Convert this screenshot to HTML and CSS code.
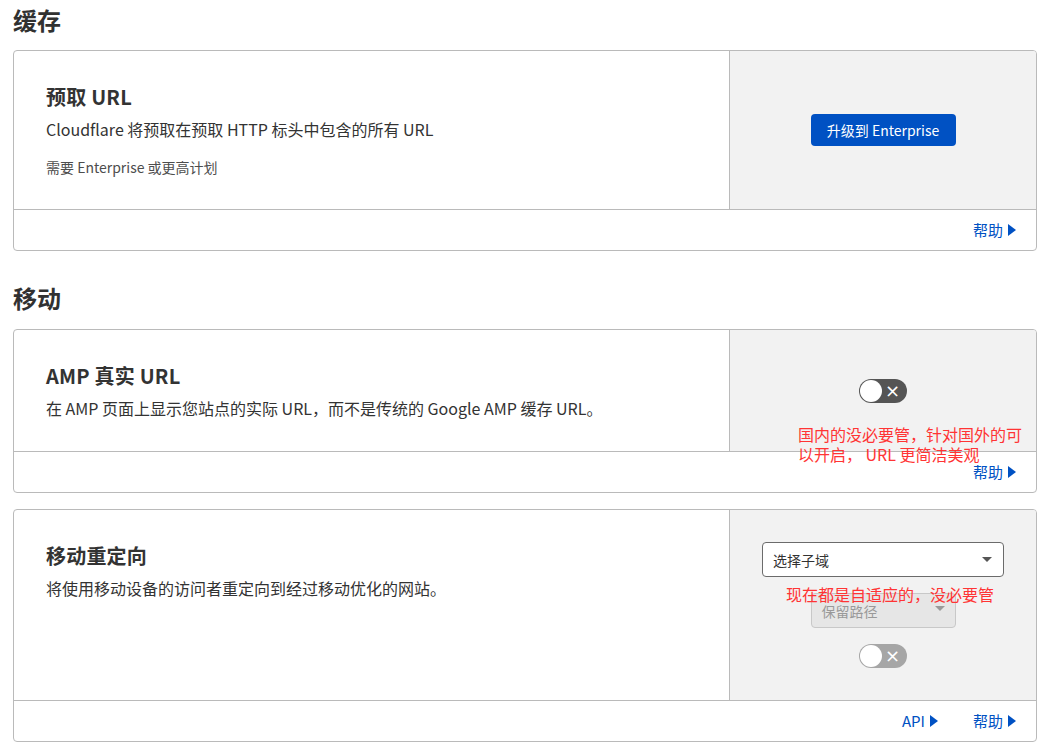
FILE: index.html
```html
<!DOCTYPE html>
<html lang="zh-CN">
<head>
<meta charset="utf-8">
<title>缓存 / 移动</title>
<link rel="stylesheet" href="styles.css">
</head>
<body>
<main class="page">
  <h2 class="section-title">缓存</h2>
  <div class="card">
    <div class="card-main">
      <div class="card-info">
        <h3 class="card-title">预取 URL</h3>
        <p class="card-desc">Cloudflare 将预取在预取 HTTP 标头中包含的所有 URL</p>
        <p class="card-note">需要 Enterprise 或更高计划</p>
      </div>
      <div class="card-control">
        <button class="btn-primary">升级到 Enterprise</button>
      </div>
    </div>
    <div class="card-footer">
      <a class="footer-link">帮助<span class="tri"></span></a>
    </div>
  </div>

  <h2 class="section-title section-gap">移动</h2>
  <div class="card">
    <div class="card-main main-amp">
      <div class="card-info">
        <h3 class="card-title">AMP 真实 URL</h3>
        <p class="card-desc">在 AMP 页面上显示您站点的实际 URL，而不是传统的 Google AMP 缓存 URL。</p>
      </div>
      <div class="card-control">
        <span class="toggle"><span class="knob"></span><span class="x">×</span></span>
      </div>
    </div>
    <div class="card-footer">
      <a class="footer-link">帮助<span class="tri"></span></a>
    </div>
    <div class="note note-amp">国内的没必要管，针对国外的可以开启， URL 更简洁美观</div>
  </div>

  <div class="card card-gap">
    <div class="card-main main-redirect">
      <div class="card-info">
        <h3 class="card-title">移动重定向</h3>
        <p class="card-desc">将使用移动设备的访问者重定向到经过移动优化的网站。</p>
      </div>
      <div class="card-control control-stack">
        <div class="select select-wide"><span>选择子域</span><span class="caret"></span></div>
        <div class="select select-disabled"><span>保留路径</span><span class="caret"></span></div>
        <span class="toggle toggle-disabled"><span class="knob"></span><span class="x">×</span></span>
      </div>
    </div>
    <div class="card-footer">
      <a class="footer-link">API<span class="tri"></span></a>
      <a class="footer-link">帮助<span class="tri"></span></a>
    </div>
    <div class="note note-redirect">现在都是自适应的，没必要管</div>
  </div>
</main>
</body>
</html>
```

FILE: styles.css
```css
* { box-sizing: border-box; }
html, body { margin: 0; padding: 0; background: #fff; }
body {
  font-family: "Noto Sans CJK SC", "Noto Sans", "Open Sans", sans-serif;
  color: #333;
}
.page { padding: 0 7px 0 13px; }
.section-title {
  margin: 0 0 10px;
  height: 40px;
  line-height: 40px;
  font-size: 24px;
  font-weight: 700;
  color: #313131;
}
.section-gap { margin-top: 27px; margin-bottom: 11px; }
.card {
  position: relative;
  border: 1px solid #bababa;
  border-radius: 4px;
  background: #fff;
}
.card-gap { margin-top: 16px; }
.card-main {
  display: flex;
  height: 159px;
  border-bottom: 1px solid #bababa;
}
.main-amp { height: 122px; }
.main-redirect { height: 191px; }
.card-info {
  flex: 1;
  padding: 33px 20px 0 32px;
}
.card-title {
  margin: 0;
  font-size: 20px;
  line-height: 26px;
  font-weight: 700;
  color: #333;
  letter-spacing: 0.2px;
}
.card-desc {
  margin: 6px 0 0;
  font-size: 16px;
  line-height: 26px;
  color: #333;
}
.card-note {
  margin: 15px 0 0;
  font-size: 14px;
  line-height: 20px;
  color: #4d4d4d;
}
.card-control {
  width: 307px;
  flex: none;
  background: #f2f2f2;
  border-left: 1px solid #bababa;
  border-top-right-radius: 3px;
  display: flex;
  align-items: center;
  justify-content: center;
}
.control-stack {
  flex-direction: column;
  gap: 16px;
}
.btn-primary {
  width: 145px;
  height: 32px;
  border: 0;
  border-radius: 4px;
  background: #0051c3;
  color: #fff;
  font-family: inherit;
  font-size: 14px;
  padding: 0;
}
.card-footer {
  height: 40px;
  display: flex;
  justify-content: flex-end;
  align-items: center;
  gap: 35px;
  padding-right: 20px;
}
.footer-link {
  display: flex;
  align-items: center;
  color: #0051c3;
  font-size: 15px;
  line-height: 20px;
}
.tri {
  display: inline-block;
  width: 0;
  height: 0;
  margin-left: 5px;
  border-top: 6px solid transparent;
  border-bottom: 6px solid transparent;
  border-left: 8px solid #0051c3;
}
.toggle {
  position: relative;
  display: inline-block;
  width: 48px;
  height: 24px;
  border-radius: 12px;
  background: #555;
}
.toggle-disabled { background: #a6a6a6; }
.knob {
  position: absolute;
  left: 1px;
  top: 1px;
  width: 22px;
  height: 22px;
  border-radius: 50%;
  background: #fff;
}
.x {
  position: absolute;
  right: 7px;
  top: 0;
  line-height: 23px;
  font-size: 18px;
  color: #fff;
  font-family: "DejaVu Sans", sans-serif;
}
.select {
  position: relative;
  height: 35px;
  border-radius: 4px;
  display: flex;
  align-items: center;
  padding-left: 10px;
  font-size: 14px;
}
.select-wide {
  width: 242px;
  background: #fff;
  border: 1px solid #6b6b6b;
  color: #333;
}
.select-disabled {
  width: 145px;
  background: #e6e6e6;
  border: 1px solid #c8c8c8;
  color: #999;
  font-size: 14px;
}
.caret {
  position: absolute;
  right: 11px;
  top: 14px;
  width: 0;
  height: 0;
  border-left: 5px solid transparent;
  border-right: 5px solid transparent;
  border-top: 5px solid #555;
}
.select-disabled .caret { border-top-color: #999; right: 10px; top: 12px; }
.note {
  position: absolute;
  color: #ff3434;
  font-size: 16px;
  line-height: 20px;
}
.note-amp { left: 784px; top: 94px; width: 230px; }
.note-redirect { left: 772px; top: 74px; }
```
